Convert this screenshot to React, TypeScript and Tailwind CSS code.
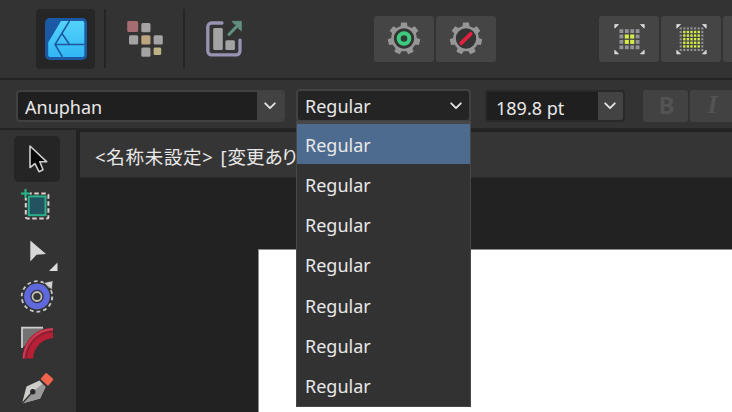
import React from "react";

function DesignerLogo() {
  return (
    <svg className="h-[42px] w-[42px]" viewBox="0 0 42 42">
      <defs>
        <linearGradient id="logo" x1="0" y1="0" x2="0" y2="1">
          <stop offset="0" stopColor="#53d3fb" />
          <stop offset="1" stopColor="#32b6f4" />
        </linearGradient>
      </defs>
      <rect width="42" height="42" rx="5" fill="#1c59a4" />
      <path d="M16 3H37.5a1.8 1.8 0 0 1 1.8 1.8V37.2a1.8 1.8 0 0 1-1.8 1.8H5a1.8 1.8 0 0 1-1.8-1.8V24.5Z" fill="url(#logo)" />
      <path d="M24.5 3L10 26.5L17.5 39M17 15.500L24.5 26.5M10 26.5H39.3" fill="none" stroke="#1b589e" strokeWidth="1.5" />
    </svg>
  );
}

function PixelLogo() {
  return (
    <svg className="h-10 w-10" viewBox="125 19 40 40">
      <rect x="127.2" y="21" width="11" height="11" rx="1.6" fill="#a56c72" />
      <g fill="#a4a2a3">
        <rect x="141.3" y="23" width="9.2" height="9.2" rx="1.5" />
        <rect x="129" y="35.2" width="9.2" height="9.2" rx="1.5" />
        <rect x="153.6" y="35.2" width="9.2" height="9.2" rx="1.5" />
        <rect x="141.3" y="47.6" width="9.2" height="9.2" rx="1.5" />
      </g>
      <rect x="141.3" y="35.2" width="9.2" height="9.2" rx="1.5" fill="#bea380" />
      <rect x="153.6" y="47.5" width="7.6" height="7.6" rx="1.4" fill="#beb184" />
    </svg>
  );
}

function ExportLogo() {
  return (
    <svg className="h-10 w-10" viewBox="204 19 40 40">
      <path d="M222 23h-10.500a3.700 3.700 0 0 0-3.700 3.700v24.400a3.700 3.700 0 0 0 3.700 3.700h24.800a3.700 3.700 0 0 0 3.700-3.700v-11" fill="none" stroke="#9892b3" strokeWidth="3.300" strokeLinecap="round" />
      <rect x="213.200" y="28" width="9.600" height="22" rx="1.500" fill="#a4a3a3" />
      <rect x="225.400" y="40.300" width="9.500" height="9.600" rx="1.500" fill="#a4a3a3" />
      <path d="M229 34.500L238.500 24.500" stroke="#61917f" strokeWidth="3" strokeLinecap="round" />
      <path d="M232 21.200H241.500V31L238.200 28.200V24.300H234.400Z" fill="#61917f" stroke="#61917f" strokeWidth=".6" />
    </svg>
  );
}

function Gear({ off = false }: { off?: boolean }) {
  return (
    <svg className="h-9 w-9" viewBox="-18 -17.500 36 36">
      <g fill="#969696">
        {Array.from({ length: 7 }, (_, i) => (
          <path key={i} d="M-3.500-11.500L-2.900-16H2.900L3.500-11.500Z" transform={`rotate(${(i * 360) / 7})`} />
        ))}
      </g>
      <circle r="11.500" fill="#343434" stroke="#969696" strokeWidth="2.600" />
      {off ? (
        <path d="M-4.700 4.700L4.700-4.700" stroke="#e3213f" strokeWidth="3.800" strokeLinecap="round" />
      ) : (
        <circle r="5.300" fill="#303b35" stroke="#3dcc7f" strokeWidth="4" />
      )}
    </svg>
  );
}

function Grid({ n, pitch, size }: { n: number; pitch: number; size: number }) {
  const start = (-(n - 1) * pitch) / 2;
  const cells = Array.from({ length: n * n }, (_, k) => [k % n, Math.floor(k / n)]);
  return (
    <svg className="h-9 w-9" viewBox="-18.500 -18.200 36 36">
      {[0, 90, 180, 270].map((a) => (
        <path key={a} d="M-14.700-14.700H-11L-14.700-11Z" fill="#d9d9d9" stroke="#d9d9d9" strokeWidth=".8" transform={`rotate(${a})`} />
      ))}
      {cells.map(([x, y]) => {
        const inside = x > 0 && y > 0 && x < n - 1 && y < n - 1;
        const s = inside ? size + 0.3 : size;
        return (
          <rect key={`${x}-${y}`} x={start + x * pitch - s / 2} y={start + y * pitch - s / 2} width={s} height={s} fill={inside ? "#d5ec48" : "#929297"} />
        );
      })}
    </svg>
  );
}

function Chevron() {
  return (
    <svg className="h-[8px] w-[12px]" viewBox="0 0 12 8" fill="none" stroke="#e6e6e6" strokeWidth="1.8" strokeLinecap="round" strokeLinejoin="round">
      <path d="M1.200 1.300L6 6.200L10.800 1.300" />
    </svg>
  );
}

function Tool({ y, active = false, children }: { y: number; active?: boolean; children: React.ReactNode }) {
  return (
    <button className={`block h-[46px] w-[46px] shrink-0 rounded-[5px] ${active ? "bg-[#252525]" : ""}`}>
      <svg className="h-[46px] w-[46px] overflow-visible" viewBox={`14 ${y} 46 46`}>
        {children}
      </svg>
    </button>
  );
}

export default function App() {
  return (
    <div className="flex h-[412px] w-[732px] flex-col overflow-hidden bg-[#333333] font-['Noto_Sans','Noto_Sans_CJK_JP',sans-serif] text-[18px] text-[#e8e8e8]">
      <header className="flex h-[78px] shrink-0 items-start">
        <div className="flex pt-[9px] pl-9">
          <button className="flex h-[60px] w-[59px] items-center justify-center rounded-[4px] bg-[#262626]">
            <DesignerLogo />
          </button>
          <div className="ml-[9px] h-[59px] w-[2px] bg-[#252525]" />
          <div className="flex w-[77px] justify-center pt-[10px]"><PixelLogo /></div>
          <div className="h-[59px] w-[2px] bg-[#252525]" />
          <div className="flex w-[78px] justify-center pt-[10px]"><ExportLogo /></div>
        </div>
        <div className="ml-[111px] flex gap-[2px] pt-4">
          <button className="flex h-[46px] w-[60px] items-center justify-center rounded-[3px] bg-[#454545]"><Gear /></button>
          <button className="flex h-[46px] w-[60px] items-center justify-center rounded-[3px] bg-[#454545]"><Gear off /></button>
        </div>
        <div className="ml-[103px] flex gap-[2px] pt-4">
          <button className="flex h-[46px] w-[60px] shrink-0 items-center justify-center rounded-[3px] bg-[#454545]"><Grid n={4} pitch={5.4} size={3.8} /></button>
          <button className="flex h-[46px] w-[60px] shrink-0 items-center justify-center rounded-[3px] bg-[#454545]"><Grid n={7} pitch={3.6} size={2.1} /></button>
          <div className="h-[46px] w-[9px] shrink-0 rounded-l-[3px] bg-[#454545]" />
        </div>
      </header>

      <div className="flex h-[52px] shrink-0 items-start border-t-2 border-b-2 border-[#242424] pt-[9px] pl-4">
        <div className="mt-px flex h-8 w-[269px] shrink-0 overflow-hidden rounded-[4px] border-2 border-[#414141] bg-[#1f1f1f]">
          <span className="flex-1 pl-[7px] leading-[31px]">Anuphan</span>
          <span className="flex w-[26px] items-center justify-center bg-[#424242] pr-px"><Chevron /></span>
        </div>
        <div className="relative ml-[11px] h-[33px] w-[175px] shrink-0">
          <div className="flex h-[33px] items-center justify-between rounded-[4px] border-2 border-[#424242] bg-[#242424] pr-[7px] pl-[7px]">
            <span className="pt-px leading-[29px]">Regular</span>
            <Chevron />
          </div>
          <ul className="absolute top-[32px] left-0 z-10 flex h-[286px] w-[175px] flex-col border-x border-t-[3px] border-b border-[#474747] bg-[#323232]">
            {Array.from({ length: 7 }, (_, i) => (
              <li key={i} className={`flex flex-1 items-center pt-[2px] pl-2 ${i === 0 ? "bg-[#4d6b8e]" : ""}`}>Regular</li>
            ))}
          </ul>
        </div>
        <div className="mt-px ml-[14px] flex h-8 w-[140px] shrink-0 overflow-hidden rounded-[4px] border-2 border-[#292929] bg-[#1f1f1f]">
          <span className="flex-1 pl-[9px] leading-[32px]">189.8 pt</span>
          <span className="flex w-[25px] items-center justify-center bg-[#434343] pr-px"><Chevron /></span>
        </div>
        <div className="mt-px ml-[18px] flex shrink-0 gap-[2px] text-[24px] leading-[29px] font-bold text-[#535353]">
          <button className="flex h-8 w-[45px] justify-center rounded-[3px] bg-[#424242] pl-[2px]">B</button>
          <button className="flex h-8 w-[45px] shrink-0 justify-center rounded-[3px] bg-[#424242] font-['Liberation_Serif',serif] text-[26px] italic">I</button>
        </div>
      </div>

      <div className="flex min-h-0 flex-1">
        <nav className="flex w-[76px] shrink-0 flex-col overflow-hidden pt-[6px] pl-[14px]">
          <Tool y={136} active>
            <path d="M30 146V167.500L35 163.700L39 171.700L43 169.700L39.800 161.800H46.800Z" fill="#060606" stroke="#cdcdcd" strokeWidth="1.600" strokeLinejoin="round" />
          </Tool>
          <Tool y={182}>
            <rect x="25.800" y="193.500" width="22.600" height="25" rx="1.500" fill="none" stroke="#dfcfd0" strokeWidth="2" strokeDasharray="4.500 2.500" />
            <rect x="28.700" y="196.400" width="16.800" height="18.800" fill="#235361" stroke="#28b18b" strokeWidth="2" />
            <path d="M21 193.500H30M25.500 189V198" stroke="#333" strokeWidth="4" />
            <path d="M21 193.500H30M25.500 189V198" stroke="#27b78a" strokeWidth="2" />
          </Tool>
          <Tool y={228}>
            <path d="M30.300 240.500V261.500L36.500 254.700L46 254Z" fill="#d7d7d7" />
            <path d="M49 271H57.500V262.500Z" fill="#dddddd" />
          </Tool>
          <Tool y={274}>
            <circle cx="37" cy="296.500" r="15.200" fill="none" stroke="#c8c8c8" strokeWidth="2" strokeDasharray="3.800 3" />
            <circle cx="37" cy="296.500" r="14.200" fill="#333" />
            <circle cx="37" cy="296.500" r="12.900" fill="#5f69dc" />
            <circle cx="37" cy="296.500" r="5" fill="#343434" stroke="#303154" strokeWidth="3.500" />
            <circle cx="37" cy="296.500" r="4.500" fill="#343434" stroke="#c3c1aa" strokeWidth="1.800" />
            <path d="M43.500 282.800L53 280.700L52 290Z" fill="#d2d2d2" stroke="#333" strokeWidth=".7" />
          </Tool>
          <Tool y={320}>
            <path d="M22 348V328H44L27 344Z" fill="#737373" />
            <path d="M22 348V327.700H43" fill="none" stroke="#cecece" strokeWidth="1.800" />
            <path d="M22.500 358.500C23 341 35 328 53 328V338C42 339 34 347 33 358.500Z" fill="#b71f37" />
            <path d="M23.500 358.500C24.500 343 36.500 329.500 53 329" fill="none" stroke="#c94a60" strokeWidth="1.300" />
            <path d="M26 358.500C27.500 344 38.500 332.300 53 331.700" fill="none" stroke="#5f2430" strokeWidth="1" />
          </Tool>
          <Tool y={366}>
            <path d="M22 403.500L26.500 386.500L39.500 380.500L45.500 387L40 398.500Z" fill="#cdcdc9" />
            <path d="M22 403.500L40 398.500L45.500 387L42.500 383.800L32.500 392Z" fill="#999" />
            <path d="M22 403.500L32.500 392" stroke="#303030" strokeWidth="1.300" />
            <circle cx="32.800" cy="391.700" r="2.700" fill="#292929" />
            <path d="M40.500 379L45 373.800Q46 372.600 47.200 373.500L52.600 378.300Q53.700 379.500 52.700 380.600L48 386Z" fill="#f0634c" />
          </Tool>
        </nav>
        <main className="flex flex-1 flex-col bg-[#222222] pt-[2px] pl-1">
          <div className="h-[46px] shrink-0 border-b border-[#2b2b2b] bg-[#353535] pl-[15px] text-[18.5px] leading-[50px] tracking-[0.7px] [word-spacing:1.5px] whitespace-nowrap">
            &lt;名称未設定&gt; [<span className="tracking-normal">変更</span><span className="tracking-[-2.5px]">あり]</span>
          </div>
          <div className="mt-[71px] ml-[178px] flex-1 border-t border-l border-[#8d8d8d] bg-white" />
        </main>
      </div>
    </div>
  );
}
